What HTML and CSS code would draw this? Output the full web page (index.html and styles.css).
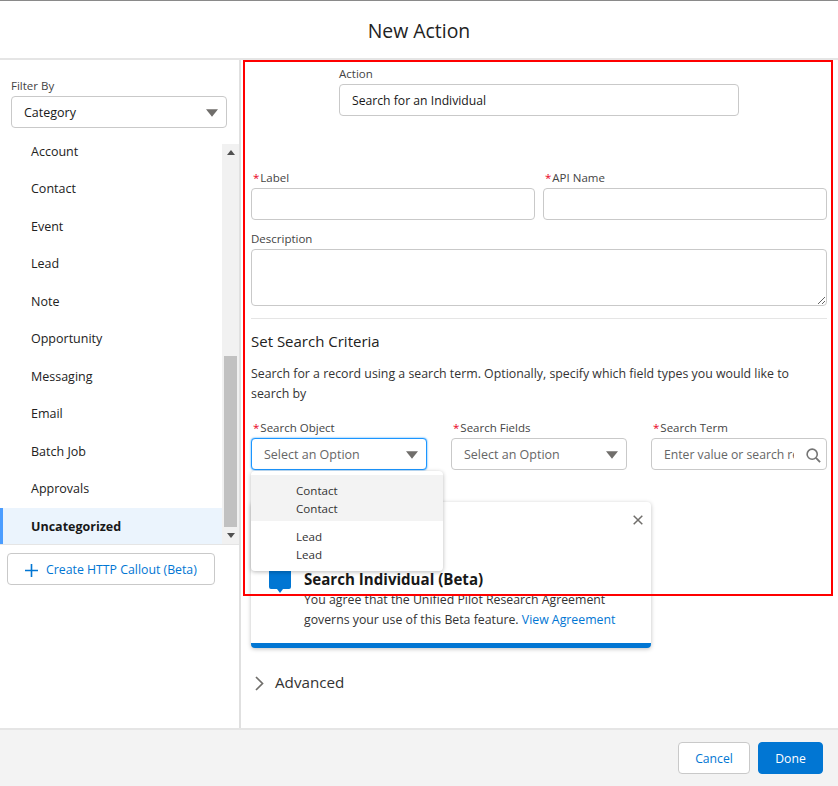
FILE: index.html
```html
<!DOCTYPE html>
<html lang="en">
<head>
<meta charset="utf-8">
<title>New Action</title>
<link rel="stylesheet" href="styles.css">
</head>
<body>
<div class="modal">
  <header class="head"><h1 class="title">New Action</h1></header>
  <main class="main">
    <aside class="side">
      <div class="filter">
        <div class="lbl">Filter By</div>
        <div class="select"><span class="val">Category</span><svg class="caret" viewBox="0 0 14 9"><path d="M0 0h14L7 9z"/></svg></div>
      </div>
      <div class="listwrap">
        <ul class="list">
          <li class="item">Account</li>
          <li class="item">Contact</li>
          <li class="item">Event</li>
          <li class="item">Lead</li>
          <li class="item">Note</li>
          <li class="item">Opportunity</li>
          <li class="item">Messaging</li>
          <li class="item">Email</li>
          <li class="item">Batch Job</li>
          <li class="item">Approvals</li>
          <li class="item active">Uncategorized</li>
        </ul>
        <div class="track">
          <svg class="arrow" viewBox="0 0 8 5"><path d="M0 5h8L4 0z"/></svg>
          <div class="thumb"></div>
          <svg class="arrow" viewBox="0 0 8 5"><path d="M0 0h8L4 5z"/></svg>
        </div>
      </div>
      <div class="createwrap">
        <button class="create"><svg class="plus" viewBox="0 0 13 13"><path d="M5.7 0h1.6v5.7H13v1.6H7.3V13H5.7V7.3H0V5.7h5.7z"/></svg>Create HTTP Callout (Beta)</button>
      </div>
    </aside>
    <section class="form">
      <div class="action-row">
        <div class="lbl">Action</div>
        <input class="input" value="Search for an Individual">
      </div>
      <div class="two">
        <div><div class="lbl"><span class="req">*</span>Label</div><input class="input"></div>
        <div><div class="lbl"><span class="req">*</span>API Name</div><input class="input"></div>
      </div>
      <div class="desc">
        <div class="lbl">Description</div>
        <textarea class="input area"></textarea>
      </div>
      <hr class="rule">
      <h2 class="sub">Set Search Criteria</h2>
      <p class="para">Search for a record using a search term. Optionally, specify which field types you would like to search by</p>
      <div class="three">
        <div class="f-obj">
          <div class="lbl"><span class="req">*</span>Search Object</div>
          <div class="select focus"><span class="ph">Select an Option</span><svg class="caret" viewBox="0 0 14 9"><path d="M0 0h14L7 9z"/></svg></div>
          <div class="drop">
            <div class="opt hot"><div>Contact</div><div>Contact</div></div>
            <div class="opt"><div>Lead</div><div>Lead</div></div>
          </div>
        </div>
        <div>
          <div class="lbl"><span class="req">*</span>Search Fields</div>
          <div class="select"><span class="ph">Select an Option</span><svg class="caret" viewBox="0 0 14 9"><path d="M0 0h14L7 9z"/></svg></div>
        </div>
        <div>
          <div class="lbl"><span class="req">*</span>Search Term</div>
          <div class="term">
            <input class="input term-input" placeholder="Enter value or search resources...">
            <svg class="lens" viewBox="0 0 16 16"><circle cx="6.6" cy="6.6" r="5.4" fill="none" stroke="#747474" stroke-width="1.7"/><path d="M10.6 10.6l4.4 4.4" stroke="#747474" stroke-width="2" fill="none"/></svg>
          </div>
        </div>
      </div>
      <div class="card">
        <svg class="close" viewBox="0 0 10 10"><path d="M.7.7l8.6 8.6M9.3.7L.7 9.3" stroke="#706e6b" stroke-width="1.5" fill="none"/></svg>
        <div class="card-body">
          <svg class="bubble" viewBox="0 0 22 32"><path d="M2 0h18a2 2 0 0 1 2 2v24a2 2 0 0 1-2 2h-6l-3 4-3-4H2a2 2 0 0 1-2-2V2a2 2 0 0 1 2-2z"/></svg>
          <div class="card-text">
            <div class="card-title">Search Individual (Beta)</div>
            <div class="card-copy">You agree that the Unified Pilot Research Agreement<br>governs your use of this Beta feature. <a class="link">View Agreement</a></div>
          </div>
        </div>
      </div>
      <div class="adv"><svg class="chev" viewBox="0 0 9 15"><path d="M1 1l6.5 6.5L1 14" fill="none" stroke="#706e6b" stroke-width="1.7"/></svg>Advanced</div>
    </section>
  </main>
  <footer class="foot">
    <button class="btn cancel">Cancel</button>
    <button class="btn done">Done</button>
  </footer>
  <div class="redbox"></div>
</div>
</body>
</html>
```
FILE: styles.css
```css
* { box-sizing: border-box; }
html, body { margin: 0; padding: 0; }
body {
  font-family: "Open Sans", "Noto Sans", sans-serif;
  font-size: 12px;
  color: #181818;
  background: #fff;
}
.modal {
  position: relative;
  width: 838px;
  height: 786px;
  display: flex;
  flex-direction: column;
  overflow: hidden;
}
.head {
  height: 60px;
  border-top: 1px solid #8a8a8a;
  border-bottom: 2px solid #e5e5e5;
  display: flex;
  justify-content: center;
  padding-top: 16px;
}
.title {
  margin: 0;
  font-size: 19.4px;
  line-height: 28px;
  font-weight: 400;
  color: #222;
}
.main { flex: 1; display: flex; min-height: 0; }
.side {
  width: 241px;
  border-right: 2px solid #e0e0e0;
  display: flex;
  flex-direction: column;
}
.filter { padding: 18px 12px 0 11px; }
.lbl {
  font-size: 11.5px;
  line-height: 16px;
  color: #444;
  height: 18px;
}
.req { color: #ea001e; margin-right: 1px; padding-left: 2px; }
.select {
  height: 32px;
  border: 1px solid #c9c9c9;
  border-radius: 4px;
  background: #fff;
  display: flex;
  align-items: center;
  justify-content: space-between;
  padding: 0 8px 0 12px;
}
.val { font-size: 12.5px; color: #181818; }
.ph { font-size: 12.5px; color: #666; }
.caret { width: 12px; height: 8px; fill: #706e6b; margin-top: 2px; }
.listwrap {
  margin-top: 16px;
  height: 401px;
  display: flex;
  border-bottom: 1px solid #e5e5e5;
}
.list {
  list-style: none;
  margin: -0.2px 0 0;
  padding: 0;
  flex: 1;
  min-width: 0;
}
.item {
  height: 37.5px;
  padding: 0 0 0 31px;
  line-height: 15px;
  font-size: 12.5px;
  color: #222;
}
.active {
  height: 36px;
  margin-top: -11px;
  line-height: 37px;
  font-weight: 700;
  color: #181818;
  background: #ebf4fd;
  border-left: 3px solid #4b9dff;
  padding-left: 28px;
}
.track {
  width: 17px;
  background: #f1f1f1;
  display: flex;
  flex-direction: column;
  align-items: center;
  justify-content: space-between;
}
.arrow { width: 8px; height: 5px; fill: #505050; margin: 6px 0; }
.thumb { width: 13px; height: 171px; margin-top: auto; background: #c1c1c1; }
.createwrap { padding: 8px 0 0 7px; }
.create {
  width: 208px;
  height: 32px;
  border: 1px solid #c9c9c9;
  border-radius: 4px;
  background: #fff;
  color: #0176d3;
  font-family: inherit;
  font-size: 12.3px;
  display: flex;
  align-items: center;
  padding: 0 0 0 17px;
}
.plus { width: 13px; height: 13px; fill: #0176d3; margin-right: 8px; margin-top: 2px; }
.form { flex: 1; min-width: 0; padding: 6px 11px 0 10px; }
.action-row { padding-left: 88px; width: 488px; height: 102px; }
.input {
  display: block;
  width: 100%;
  height: 32px;
  border: 1px solid #c9c9c9;
  border-radius: 4px;
  background: #fff;
  padding: 0 12px;
  font-family: inherit;
  font-size: 12.2px;
  color: #181818;
  outline: none;
}
.input::placeholder { color: #666; opacity: 1; }
.two { display: grid; grid-template-columns: 284px 284px; gap: 8px; }
.two .lbl, .three .lbl { height: 20px; padding-top: 2px; }
.desc { margin-top: 11px; }
.desc .lbl { height: 18px; }
.area { height: 57px; resize: vertical; padding-top: 8px; }
.rule { margin: 12px 0 0; border: 0; border-top: 1px solid #e5e5e5; }
.sub {
  margin: 11px 0 0;
  font-size: 15px;
  line-height: 22px;
  font-weight: 400;
  color: #222;
}
.para {
  margin: 12px 0 0;
  width: 570px;
  font-size: 12.35px;
  line-height: 20px;
  color: #333;
}
.three {
  margin-top: 14px;
  display: grid;
  grid-template-columns: 176px 176px 176px;
  gap: 24px;
}
.f-obj { position: relative; }
.focus { border-color: #1b96ff; box-shadow: 0 0 2px #1b96ff; }
.drop {
  position: absolute;
  left: 0;
  top: 53px;
  width: 192px;
  height: 100px;
  z-index: 3;
  padding: 4px 0;
  background: #fff;
  border-radius: 4px;
  box-shadow: 0 1px 4px rgba(0,0,0,.28);
}
.opt {
  height: 46px;
  padding: 7px 0 0 45px;
  font-size: 11.6px;
  line-height: 18px;
  color: #333;
}
.hot { background: #f3f3f3; }
.term { position: relative; }
.term-input { padding-right: 32px; }
.lens { position: absolute; right: 6px; top: 10px; width: 15px; height: 15px; }
.card {
  position: relative;
  margin-top: 32px;
  width: 400px;
  height: 146px;
  border-radius: 4px;
  border-bottom: 5px solid #0176d3;
  background: #fff;
  box-shadow: 0 1px 4px rgba(0,0,0,.25);
  padding: 67px 0 0 18px;
}
.close { position: absolute; right: 8px; top: 13px; width: 10px; height: 10px; }
.card-body { display: flex; }
.bubble { width: 22px; height: 32px; fill: #0176d3; margin-right: 13px; margin-top: -8px; flex: none; }
.card-title { font-size: 15.1px; line-height: 21px; font-weight: 700; color: #181818; }
.card-copy { font-size: 12.3px; line-height: 20px; color: #333; }
.link { color: #0176d3; }
.adv {
  margin-top: 22px;
  display: flex;
  align-items: center;
  height: 24px;
  font-size: 15.2px;
  color: #333;
}
.chev { width: 9px; height: 15px; margin: 2px 11px 0 4px; }
.foot {
  height: 58px;
  background: #f3f3f3;
  border-top: 2px solid #e5e5e5;
  display: flex;
  justify-content: flex-end;
  gap: 8px;
  padding: 12px 15px 0 0;
}
.btn {
  height: 32px;
  border-radius: 4px;
  font-family: inherit;
  font-size: 12.2px;
  padding: 0;
}
.cancel { width: 72px; background: #fff; border: 1px solid #c9c9c9; color: #0176d3; }
.done { width: 65px; background: #0176d3; border: 1px solid #0176d3; color: #fff; }
.redbox {
  position: absolute;
  left: 243px;
  top: 60px;
  width: 590px;
  height: 536px;
  border: 2px solid #f00;
  z-index: 5;
  pointer-events: none;
}
```
